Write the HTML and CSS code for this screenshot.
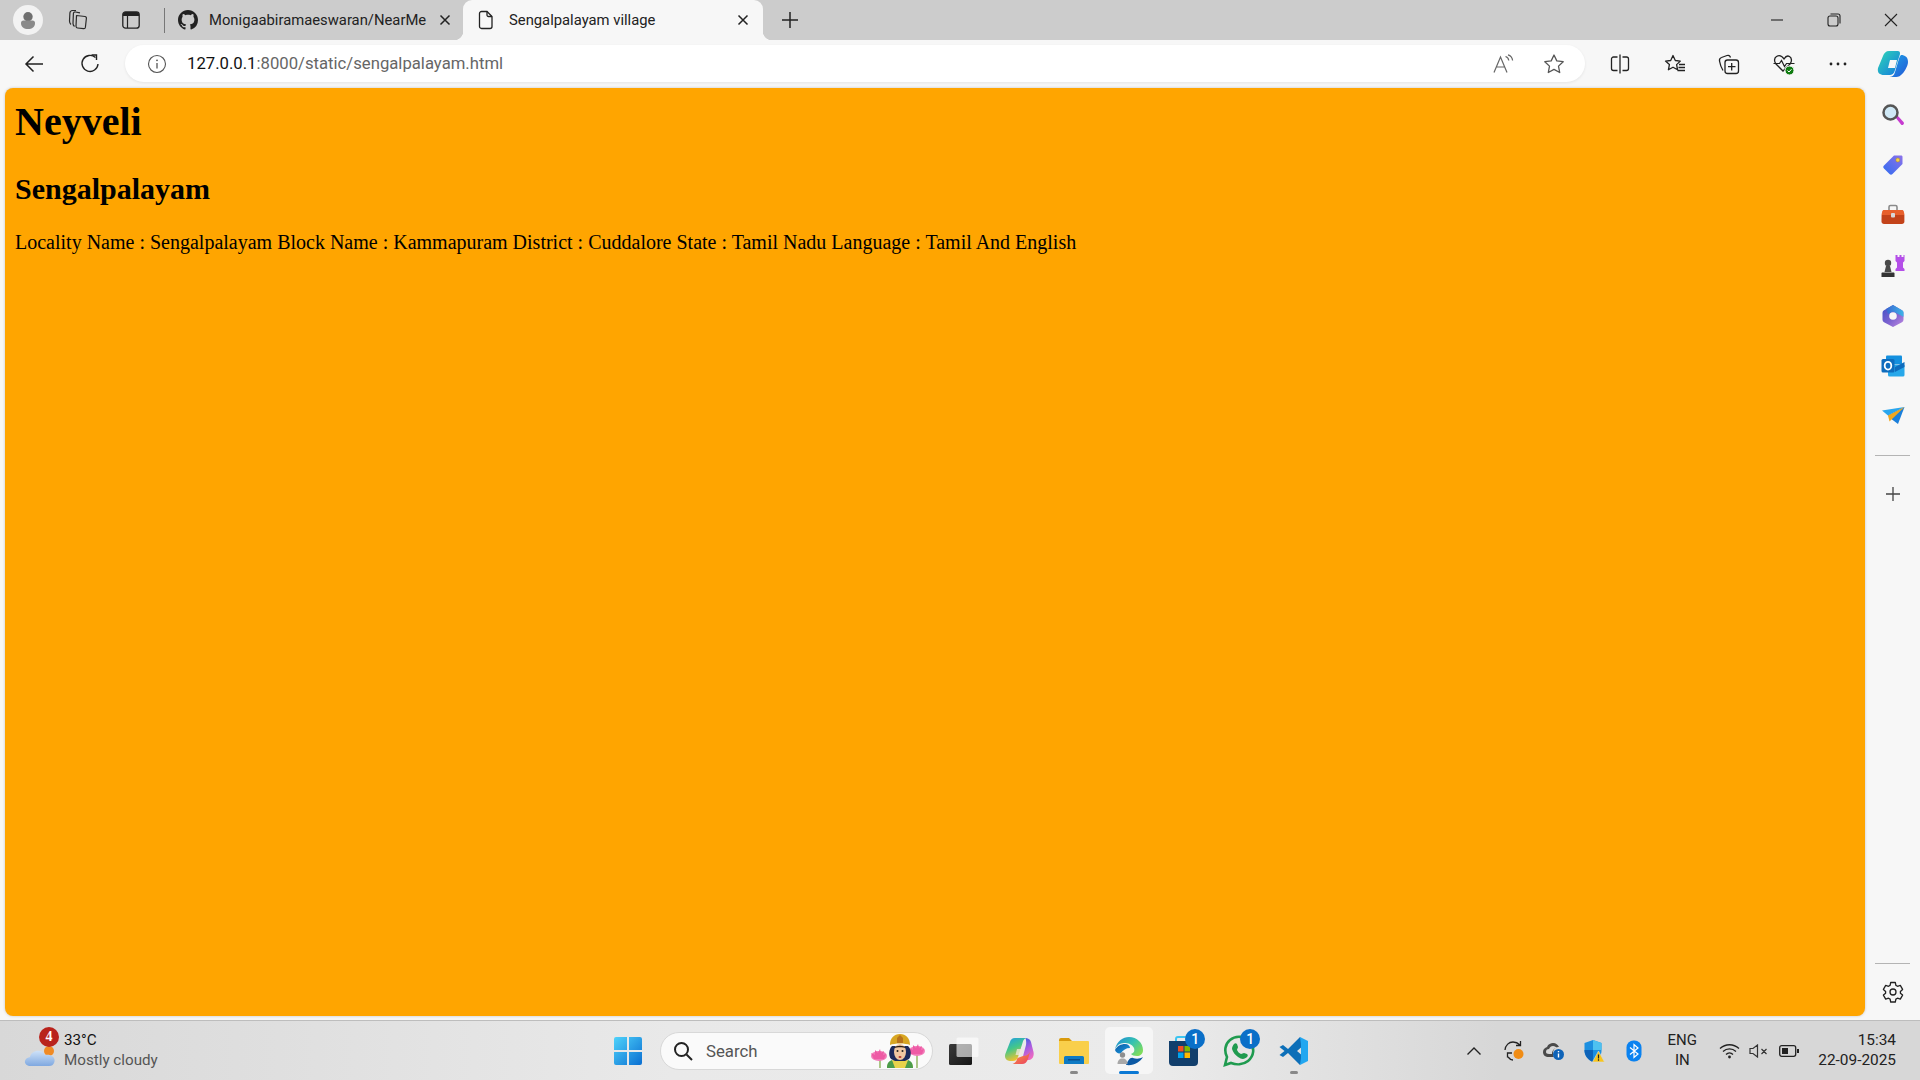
FILE: index.html
```html
<!DOCTYPE html>
<html lang="en">
<head>
    <meta charset="utf-8">
    <title>Sengalpalayam village</title>
    <link rel="stylesheet" href="styles.css">
</head>
<body>
<div class="tabstrip">
    <div class="profile">
        <svg width="30" height="30" viewBox="0 0 30 30"><circle cx="15" cy="11.700" r="4.700" fill="#6f6f6f"/><path d="M8 18a2.500 2.500 0 0 1 2.500-2.500h9A2.500 2.500 0 0 1 22 18c0 4-3 6-7 6s-7-2-7-6z" fill="#8a8a8a"/></svg>
    </div>
    <div class="strip-btn first">
        <svg width="22" height="22" viewBox="0 0 22 22" fill="none" stroke="#2a2a2a" stroke-width="1.200" stroke-linejoin="round"><path d="M9.500 6.500l8.500 1c1 .1 1.500.8 1.400 1.800l-1 9c-.1 1-.8 1.500-1.800 1.400l-6-.7c-1-.1-1.500-.8-1.600-1.800z"/><path d="M13 3.800L8.500 3c-1.200-.2-2 .5-2.100 1.500l-.4 10c0 1 .3 2 1.500 3"/><path d="M9 1.500L5.500 1.500C4 1.700 3 2.500 2.900 4L2.500 12c0 1.500.5 2.500 1.500 3.500"/></svg>
    </div>
    <div class="strip-btn second">
        <svg width="18" height="18" viewBox="0 0 18 18"><rect x=".8" y=".8" width="16.400" height="16.400" rx="2.800" fill="none" stroke="#222" stroke-width="1.300"/><path d="M1 3.500A2.500 2.500 0 0 1 3.500 1h11A2.500 2.500 0 0 1 17 3.500V5H1z" fill="#222"/><path d="M5.500 5v12" stroke="#222" stroke-width="1.200"/></svg>
    </div>
    <div class="strip-sep"></div>
    <div class="tab">
        <svg class="tab-icon" width="20" height="20" viewBox="0 0 16 16"><path fill="#222" d="M8 0C3.58 0 0 3.58 0 8c0 3.54 2.290 6.530 5.470 7.590.4.070.55-.17.55-.38 0-.19-.01-.82-.01-1.490-2.010.37-2.530-.49-2.690-.94-.09-.23-.48-.94-.82-1.130-.28-.15-.68-.52-.01-.53.63-.01 1.080.58 1.230.82.72 1.210 1.870.87 2.330.66.07-.52.28-.87.51-1.070-1.780-.2-3.640-.89-3.640-3.950 0-.87.31-1.590.82-2.150-.08-.2-.36-1.020.08-2.120 0 0 .67-.21 2.200.82.64-.18 1.320-.27 2-.27.68 0 1.360.09 2 .27 1.530-1.040 2.200-.82 2.200-.82.44 1.100.16 1.920.08 2.120.51.56.82 1.270.82 2.150 0 3.070-1.870 3.750-3.650 3.950.29.25.54.73.54 1.480 0 1.070-.01 1.930-.01 2.200 0 .21.15.46.55.38A8.013 8.013 0 0 0 16 8c0-4.420-3.580-8-8-8z"/></svg>
        <span class="tab-title">Monigaabiramaeswaran/NearMe</span>
        <svg class="tab-close" width="12" height="12" viewBox="0 0 12 12" stroke="#222" stroke-width="1.500"><path d="M1.500 1.500l9 9M10.500 1.500l-9 9"/></svg>
    </div>
    <div class="tab active">
        <svg class="tab-icon" width="16" height="20" viewBox="0 0 16 20" fill="none" stroke="#222" stroke-width="1.300"><path d="M3.500 1.500h5.500l5 5v10a2 2 0 0 1-2 2h-8.500a2 2 0 0 1-2-2v-13a2 2 0 0 1 2-2z"/><path d="M9 1.500v3.500a1.500 1.500 0 0 0 1.500 1.500h3.500"/></svg>
        <span class="tab-title">Sengalpalayam village</span>
        <svg class="tab-close" width="12" height="12" viewBox="0 0 12 12" stroke="#222" stroke-width="1.500"><path d="M1.500 1.500l9 9M10.500 1.500l-9 9"/></svg>
    </div>
    <div class="new-tab">
        <svg width="20" height="20" viewBox="0 0 20 20" stroke="#222" stroke-width="1.500"><path d="M10 2v16M2 10h16"/></svg>
    </div>
    <div class="window-btns">
        <div class="win-btn min"><svg width="14" height="14" viewBox="0 0 14 14" stroke="#222" stroke-width="1.100"><path d="M1 7h12"/></svg></div>
        <div class="win-btn restore"><svg width="14" height="14" viewBox="0 0 14 14" fill="none" stroke="#222" stroke-width="1.100"><rect x="1" y="3" width="10" height="10" rx="2"/><path d="M3.500 1h7.500a2 2 0 0 1 2 2v7.500"/></svg></div>
        <div class="win-btn close"><svg width="14" height="14" viewBox="0 0 14 14" stroke="#222" stroke-width="1.100"><path d="M1 1l12 12M13 1L1 13"/></svg></div>
    </div>
</div>

<div class="toolbar">
    <div class="nav-btn back">
        <svg width="20" height="20" viewBox="0 0 20 20" fill="none" stroke="#222" stroke-width="1.500"><path d="M19 10H2M9.500 2.500L2 10l7.500 7.500"/></svg>
    </div>
    <div class="nav-btn refresh">
        <svg width="20" height="20" viewBox="0 0 20 20" fill="none" stroke="#222" stroke-width="1.400"><path d="M15.500 3.600A8 8 0 1 0 18 10"/><path d="M11.500 1h5v5"/></svg>
    </div>
    <div class="addressbar">
        <svg class="info" width="20" height="20" viewBox="0 0 20 20" fill="none" stroke="#555" stroke-width="1.100"><circle cx="10" cy="10" r="8.500"/><path d="M10 9v5.500" stroke-width="1.300"/><circle cx="10" cy="6.300" r=".9" fill="#555" stroke="none"/></svg>
        <span class="url"><span class="url-host">127.0.0.1</span>:8000/static/sengalpalayam.html</span>
        <svg class="read" width="22" height="20" viewBox="0 0 22 20" fill="none" stroke="#666" stroke-width="1.200"><path d="M1 18.500L7.500 3l6.500 15.500M3.500 13h8"/><path d="M12.500 2.500c2 .5 3 2 3.300 4M15 .8c2.700.7 4.300 2.800 4.600 5.700"/></svg>
        <svg class="star" width="22" height="22" viewBox="0 0 22 22" fill="none" stroke="#555" stroke-width="1.300" stroke-linejoin="round"><path d="M11 2l2.800 5.900 6.400.8-4.700 4.400 1.200 6.400-5.700-3.100-5.700 3.100 1.200-6.400L1.800 8.700l6.400-.8z"/></svg>
    </div>
    <div class="tool-btns">
        <div class="tool-btn"><svg width="20" height="20" viewBox="0 0 20 20" fill="none" stroke="#222" stroke-width="1.300"><path d="M7.500 3H3.500a2 2 0 0 0-2 2v9.500a2 2 0 0 0 2 2h4M12.500 3h4a2 2 0 0 1 2 2v9.500a2 2 0 0 1-2 2h-4M10 .5v19"/></svg></div>
        <div class="tool-btn"><svg width="22" height="20" viewBox="0 0 22 20" fill="none" stroke="#222" stroke-width="1.300" stroke-linejoin="round"><path d="M9 1.500l2.300 5 5 .6-3.700 3.500 1 5.200L9 13.200l-4.600 2.600 1-5.200L1.500 7.100l5.200-.6z"/><path d="M15 10.500h6M14.500 13.500h6.500M13.500 16.500h7.500"/></svg></div>
        <div class="tool-btn"><svg width="22" height="22" viewBox="0 0 22 22" fill="none" stroke="#222" stroke-width="1.300"><rect x="7" y="7" width="13.500" height="13.500" rx="2.500"/><path d="M13.700 10v7.500M10 13.700h7.500"/><path d="M5 17.500C3.500 15 2 11 1.500 8c-.3-2 .5-3 2-3.500L9 2.500c1.500-.5 3 0 3.500 2"/></svg></div>
        <div class="tool-btn"><svg width="24" height="24" viewBox="0 0 24 24"><path d="M12 7c-2-3-5-4-7.500-2.500C2 6 2 9.500 4 12l7 7 7-7c2-2.500 2-6-.5-7.500C15 3 13.500 4.500 12 7z" fill="none" stroke="#222" stroke-width="1.300"/><path d="M1.500 11.500h6l2-3 3 6 2-3h8" fill="none" stroke="#222" stroke-width="1.200"/><circle cx="17.500" cy="18.500" r="4.500" fill="#107c10" stroke="#f7f7f7"/><path d="M15.500 18.500l1.500 1.500 2.500-2.800" fill="none" stroke="#fff" stroke-width="1"/></svg></div>
        <div class="tool-btn"><svg width="18" height="4" viewBox="0 0 18 4" fill="#222"><circle cx="2" cy="2" r="1.400"/><circle cx="9" cy="2" r="1.400"/><circle cx="16" cy="2" r="1.400"/></svg></div>
        <div class="tool-btn"><svg width="32" height="28" viewBox="0 0 32 28"><defs><linearGradient id="cpA" x1="0" y1="0" x2="1" y2="1"><stop offset="0" stop-color="#2fd8b5"/><stop offset="1" stop-color="#1478e0"/></linearGradient><linearGradient id="cpB" x1="0" y1="0" x2="1" y2="1"><stop offset="0" stop-color="#1ba8e8"/><stop offset="1" stop-color="#2457d6"/></linearGradient></defs><path d="M12 1h8c3 0 3 1 3 3l-5 16c-1 4-3 5-6 5H7C3 25 0 23 1 18l5-12c1-3 3-5 6-5z" fill="url(#cpA)"/><path d="M24 5c4 0 7 2 7 7 0 4-4 11-7 13-2 2-4 2-7 2H11c4 0 6-1 7-5l3-10c1-3 1-5 3-7z" fill="url(#cpB)"/><path d="M13 10h7l-2 8h-7z" fill="#f7f7f7"/></svg></div>
    </div>
</div>

<div class="main">
    <div class="page">
        <h1>Neyveli</h1>
        <h2>Sengalpalayam</h2>
        <p>Locality Name : Sengalpalayam Block Name : Kammapuram District : Cuddalore State : Tamil Nadu Language : Tamil And English</p>
    </div>
    <div class="sidebar">
        <div class="side-btn"><svg width="24" height="24" viewBox="0 0 24 24"><path d="M14.500 14.500l2-2 6 6.500c.8 1 .5 1.800-.2 2.500-.7.700-1.600.7-2.300 0z" fill="#c63bd0"/><circle cx="9.500" cy="9.500" r="7" fill="#cfe8f5" stroke="#555" stroke-width="2.500"/></svg></div>
        <div class="side-btn"><svg width="22" height="22" viewBox="0 0 22 22"><defs><linearGradient id="tagG" x1="0" y1="1" x2="1" y2="0"><stop offset="0" stop-color="#2f6cf0"/><stop offset="1" stop-color="#8c72ea"/></linearGradient></defs><path d="M12 1.500h7c1 0 1.500.5 1.500 1.500v7L10.500 20c-1 1-2 1-3 0L2 14.500c-1-1-1-2 0-3z" fill="url(#tagG)"/><circle cx="15.800" cy="6" r="2" fill="#f3d14a" stroke="#b08a20" stroke-width=".5"/></svg></div>
        <div class="side-btn"><svg width="24" height="22" viewBox="0 0 24 22"><path d="M8 6V3c0-1 .7-1.500 1.500-1.500h5c.8 0 1.500.5 1.500 1.500v3" fill="none" stroke="#8a8a8a" stroke-width="1.600"/><path d="M3 6h18c1 0 1.600.6 1.800 1.500l.7 3.500H.5l.7-3.500C1.400 6.600 2 6 3 6z" fill="#e8602c"/><path d="M.6 11h22.800v6.500c0 1.400-1 2.500-2.500 2.500H3c-1.500 0-2.500-1.100-2.500-2.500z" fill="#c3431a"/><rect x="10" y="9" width="4" height="4.500" rx="1" fill="#d8d8d8"/></svg></div>
        <div class="side-btn"><svg width="24" height="24" viewBox="0 0 24 24"><path d="M14.500 1h2v2h2V1h2v2h2V1h1v6l-1.500 1.500v5l1.500 1.500v2h-9v-2l1.500-1.500v-5L14.500 7z" fill="#b44fe8"/><circle cx="7" cy="9" r="3.200" fill="#4a4a4a"/><path d="M5 12h4l1.500 6h-7z" fill="#4a4a4a"/><path d="M1.500 18.500h11c.6 0 1 .5 1 1v3.500H.5v-3.500c0-.5.400-1 1-1z" fill="#333"/></svg></div>
        <div class="side-btn"><svg width="22" height="24" viewBox="0 0 22 24"><defs><linearGradient id="msA" x1="0" y1="0" x2="1" y2="1"><stop offset="0" stop-color="#3d4ec4"/><stop offset=".55" stop-color="#7e63d0"/><stop offset="1" stop-color="#c08ae0"/></linearGradient><linearGradient id="msB" x1="0" y1="0" x2="1" y2="0"><stop offset="0" stop-color="#3a66d0"/><stop offset="1" stop-color="#3fb4e8"/></linearGradient></defs><path d="M11 1l9 5.200a3 3 0 0 1 1.500 2.500v7a3 3 0 0 1-1.500 2.500L11 23 2 18.200A3 3 0 0 1 .5 15.700v-7A3 3 0 0 1 2 6.200z" fill="url(#msA)"/><path d="M11 1l9 5.200c1 .6 1.500 1.500 1.500 2.500v4l-6-3L11 7.500 6 10 4 4.900z" fill="url(#msB)"/><circle cx="11" cy="12" r="3.800" fill="#f7f7f7"/></svg></div>
        <div class="side-btn"><svg width="24" height="22" viewBox="0 0 24 22"><rect x="5" y="0.500" width="16" height="9" rx="1" fill="#1490df"/><path d="M7 10h16.500v10a1.500 1.500 0 0 1-1.500 1.500H8.500A1.500 1.500 0 0 1 7 20z" fill="#28a8ea"/><path d="M14 12l9.500-5v5l-9.500 5z" fill="#0f6cbd"/><rect x=".5" y="4" width="13" height="13.500" rx="1.500" fill="#0f6cbd"/><ellipse cx="7" cy="10.700" rx="3.300" ry="3.900" fill="none" stroke="#fff" stroke-width="1.800"/></svg></div>
        <div class="side-btn"><svg width="24" height="20" viewBox="0 0 24 20"><path d="M1 4.500L23.500 1 7 9.500z" fill="#2aa6ee"/><path d="M7 9.500L23.500 1l-6.500 17-6-4.500z" fill="#1b7fdb"/><path d="M7 9.500l16.500-8.500L8.500 15.500z" fill="#f0a71f"/></svg></div>
        <div class="side-sep add-sep"></div>
        <div class="side-btn add"><svg width="16" height="16" viewBox="0 0 16 16" stroke="#444" stroke-width="1.300"><path d="M8 1v14M1 8h14"/></svg></div>
        <div class="side-sep settings-sep"></div>
        <div class="side-btn settings"><svg width="22" height="22" viewBox="0 0 22 22" fill="none" stroke="#222" stroke-width="1.300" stroke-linejoin="round"><path d="M8.700 1.500h4.600l.6 2.900 1.600.9 2.800-.9 2.300 4-2.200 2 0 1.800 2.200 1.900-2.300 4-2.800-.9-1.600.9-.6 2.900H8.700l-.6-2.900-1.600-.9-2.800.9-2.300-4 2.200-1.900 0-1.800-2.200-2 2.300-4 2.800.9 1.600-.9z"/><circle cx="11" cy="11" r="3"/></svg></div>
    </div>
</div>

<div class="taskbar">
    <div class="task-left">
        <div class="weather-icon">
            <svg width="32" height="24" viewBox="0 0 32 24"><defs><linearGradient id="cloudG" x1="0" y1="0" x2="0" y2="1"><stop offset="0" stop-color="#cfe2f8"/><stop offset="1" stop-color="#7fa8e0"/></linearGradient></defs><circle cx="25" cy="7" r="5" fill="#f08a24"/><path d="M7 22c-8 0-8-8-1-9 1-7 12-9 15-2 8-1 11 4 9 8-1 2-2 3-5 3z" fill="url(#cloudG)"/></svg>
            <span class="weather-badge">4</span>
        </div>
        <div class="weather-text">
            <span class="temp">33°C</span>
            <span class="cond">Mostly cloudy</span>
        </div>
    </div>
    <div class="task-center">
        <div class="task-icon">
            <svg width="30" height="30" viewBox="0 0 30 30"><defs><linearGradient id="winG" x1="0" y1="0" x2="1" y2="1"><stop offset="0" stop-color="#4fd3fb"/><stop offset="1" stop-color="#0a6ed1"/></linearGradient></defs><path d="M1 3a2 2 0 0 1 2-2h11v13H1zM16 1h11a2 2 0 0 1 2 2v11H16zM1 16h13v13H3a2 2 0 0 1-2-2zM16 16h13v11a2 2 0 0 1-2 2H16z" fill="url(#winG)"/></svg>
        </div>
        <div class="searchbox">
            <svg width="20" height="20" viewBox="0 0 20 20" fill="none" stroke="#222" stroke-width="2"><circle cx="8.500" cy="8.500" r="6.500"/><path d="M13.500 13.500L19 19"/></svg>
            <span class="search-label">Search</span>
            <svg class="search-art" width="56" height="34" viewBox="0 0 56 34"><path d="M10 34V24M47 34V20" stroke="#7ba53c" stroke-width="1.200"/><ellipse cx="9" cy="22" rx="8" ry="5" fill="#f27ab8"/><path d="M1 19l4 2 0-5 3 3 2-4 1 4 3-2-1 4 3-1-2 5H4z" fill="#ee5aa5"/><ellipse cx="47" cy="17" rx="8" ry="5" fill="#f27ab8"/><path d="M39 14l4 2 0-5 3 3 2-4 1 4 3-2-1 4 3-1-2 5h-11z" fill="#ee5aa5"/><path d="M17 34c0-6 5-9 13-9s13 3 13 9z" fill="#e8d24a"/><path d="M17 34c0-5 2-7 5-8l3 8zM43 34c0-5-2-7-5-8l-3 8z" fill="#4b9c4a"/><path d="M21 25c-3-4-2-10 1-13h16c3 3 4 9 1 13l-4 2H25z" fill="#1c2a5c"/><path d="M20 11C20 4 24 0 30 0s10 4 10 11c-4-2-16-2-20 0z" fill="#d8a622"/><path d="M27 4l3-3 3 3v5h-6z" fill="#b8731c"/><ellipse cx="30" cy="18" rx="6" ry="8" fill="#f0c7a2"/><path d="M24 14c2-3 10-3 12 0-3-1-9-1-12 0z" fill="#2a1c12"/><circle cx="27.500" cy="17" r="1" fill="#222"/><circle cx="32.500" cy="17" r="1" fill="#222"/><ellipse cx="30" cy="23" rx="1.500" ry="1" fill="#b3372c"/></svg>
        </div>
        <div class="task-icon taskview">
            <svg width="30" height="28" viewBox="0 0 30 28"><defs><linearGradient id="tvG" x1="0" y1="0" x2="1" y2="1"><stop offset="0" stop-color="#3a3a3a"/><stop offset="1" stop-color="#161616"/></linearGradient></defs><rect x="0" y="7" width="23" height="21" rx="1.500" fill="url(#tvG)"/><rect x="7.500" y=".5" width="22" height="19.500" rx="1.500" fill="#fff" fill-opacity=".62"/></svg>
        </div>
        <div class="task-icon">
            <svg width="30" height="28" viewBox="0 0 30 28"><defs><linearGradient id="tbCopA" x1="0" y1="0" x2=".4" y2="1"><stop offset="0" stop-color="#1f9be8"/><stop offset=".5" stop-color="#43c78a"/><stop offset="1" stop-color="#f5c32c"/></linearGradient><linearGradient id="tbCopB" x1=".2" y1="0" x2=".6" y2="1"><stop offset="0" stop-color="#3a5fe0"/><stop offset=".5" stop-color="#a85ce0"/><stop offset="1" stop-color="#f06ac0"/></linearGradient><linearGradient id="tbCopC" x1="0" y1="0" x2="1" y2="1"><stop offset="0" stop-color="#f7a03a"/><stop offset="1" stop-color="#ec3f63"/></linearGradient></defs><path d="M11 1C8 1 6.500 3 6 5L1.500 16.500C0 20.500 2 24 6 24h3c2 0 4-1 5-4l4.500-14c.5-3 2-5 4.500-5z" fill="url(#tbCopA)"/><path d="M21 1c3 0 5 1 6 4l2.500 10c1 5-2 8-5.500 8h-6l4-15c.5-3 0-7-1-7z" fill="url(#tbCopB)"/><path d="M13.500 21c-1 3.500-3 6-6 6H18c3 0 5-2 6-5l2-7c-2 3-4 4-7 4z" fill="url(#tbCopC)"/><path d="M13 12h6l-1.500 6h-6z" fill="#f3e9e0" fill-opacity=".75"/></svg>
        </div>
        <div class="task-icon open">
            <svg width="30" height="27" viewBox="0 0 30 27"><path d="M0 3a2 2 0 0 1 2-2h8l3 3h-13z" fill="#d99a0c"/><path d="M0 4h29a1 1 0 0 1 1 1v21a1 1 0 0 1-1 1H1a1 1 0 0 1-1-1z" fill="#f9cf4b"/><path d="M5 20.500a1.500 1.500 0 0 1 1.500-1.500h17a1.500 1.500 0 0 1 1.500 1.500V27H5z" fill="#0e7ac4"/><rect x="9" y="22" width="12" height="1.500" fill="#0a4f8c"/></svg>
        </div>
        <div class="task-icon active">
            <svg width="30" height="30" viewBox="0 0 30 30"><defs><linearGradient id="edgeA" x1="0" y1="0" x2="1" y2=".7"><stop offset="0" stop-color="#1b86d8"/><stop offset=".55" stop-color="#35c1b1"/><stop offset="1" stop-color="#7fdc5c"/></linearGradient><linearGradient id="edgeB" x1="0" y1="0" x2="1" y2="1"><stop offset="0" stop-color="#0c59a4"/><stop offset="1" stop-color="#1b9de2"/></linearGradient></defs><path d="M1 13C3 5 9 1 15 1c8 0 14 6 14 13 0 4-3 6-6 6s-5-1-6-2c3-1 4-3 3-6-2-4-6-5-10-5-4 0-7 2-9 6z" fill="url(#edgeA)"/><path d="M1 14c2-4 6-6 10-6 3 0 5 2 5 4-4 0-7 2-9 5-2 1-5 0-6-3z" fill="url(#edgeB)"/><path d="M12 29c8 1 14-3 17-8-3 2-7 2-10 1-3-1-5 3-7 7z" fill="#0c59a4"/><circle cx="8.500" cy="19" r="2.700" fill="#8e8e8e"/><path d="M3.500 28c0-3.500 2-5.500 5-5.500s5 2 5 5.500z" fill="#a8a8a8"/></svg>
        </div>
        <div class="task-icon">
            <svg width="30" height="30" viewBox="0 0 30 30"><path d="M7 6V3c0-1 1-2 2-2h9" fill="none" stroke="#3cc4f0" stroke-width="2"/><path d="M0 5h29v21a4 4 0 0 1-4 4H4a4 4 0 0 1-4-4z" fill="#123f6c"/><rect x="9" y="10" width="5.500" height="5.500" fill="#f25022"/><rect x="15.500" y="10" width="5.500" height="5.500" fill="#7fba00"/><rect x="9" y="16.500" width="5.500" height="5.500" fill="#00a4ef"/><rect x="15.500" y="16.500" width="5.500" height="5.500" fill="#ffb900"/></svg>
            <span class="count-badge">1</span>
        </div>
        <div class="task-icon">
            <svg width="32" height="32" viewBox="0 0 32 32"><path d="M2 30l2-8C1 16 2 9 7 5c6-5 15-4 20 2 5 6 4 14-2 19-5 4-12 4-17 2z" fill="none" stroke="#1f9b4f" stroke-width="2.600"/><path d="M11 9c1-1 2-1 3 0l1 3c0 1-1 2-1 3 1 2 2 3 4 4 1 0 2-1 3-1l3 1c1 1 1 2 0 3-2 2-5 3-9 0-3-2-5-5-6-8 0-2 1-4 2-5z" fill="#1f9b4f"/></svg>
            <span class="count-badge">1</span>
        </div>
        <div class="task-icon open">
            <svg width="30" height="30" viewBox="0 0 30 30"><path d="M21 1L9 13 4 9 .5 11l5 4-5 4L4 21l5-4 12 12 4-8-7-6 7-6z" fill="#0d6fb8"/><path d="M21 1l8 4v20l-8 4 1-7V8z" fill="#22a7f0"/></svg>
        </div>
    </div>
    <div class="task-right">
        <div class="tray-icon"><svg width="16" height="10" viewBox="0 0 16 10" fill="none" stroke="#222" stroke-width="1.400"><path d="M1.500 8.500L8 2l6.500 6.500"/></svg></div>
        <div class="tray-icon"><svg width="22" height="22" viewBox="0 0 22 22" fill="none" stroke="#222" stroke-width="1.300"><path d="M2 10C2.500 5 6 2 10 2c3 0 5 1 7 3M17.500 1v4.500H13"/><path d="M4.500 17.500V13H9M5 17c1.500 2 3 3 5 3"/><circle cx="15.500" cy="14" r="5" fill="#f08c14" stroke="none"/></svg></div>
        <div class="tray-icon"><svg width="22" height="20" viewBox="0 0 22 20"><path d="M6 16c-4 0-6-2-6-5 0-3 2-4 4-5 1-3 4-4 6-4 3 0 5 2 6 4-3 0-6 2-6 6 0 2 0 3 1 4z" fill="#4a4a4a"/><path d="M6 13c-2 0-3-1-3-2 0-2 1-3 3-3 1-2 2-3 4-3 2 0 3 1 4 2-3 0-5 3-5 6z" fill="#d8d8d8"/><circle cx="15.500" cy="13.500" r="5.500" fill="#0e63b8"/><path d="M15.500 12.500v4M15.500 10v1.200" stroke="#fff" stroke-width="1.400"/></svg></div>
        <div class="tray-icon"><svg width="22" height="24" viewBox="0 0 22 24"><path d="M10 1l8.500 3v8c0 5-4 9-8.500 11-4.500-2-8.500-6-8.500-11V4z" fill="#1c8fe0"/><path d="M10 1l8.500 3v7H10z" fill="#4dc1f0"/><path d="M1.500 11H10v12c-4.500-2-8.500-6-8.500-12z" fill="#0e63b8"/><path d="M15.500 12l6 11h-12z" fill="#f8c51c" stroke="#d8d8d8" stroke-width=".6"/><path d="M15.500 15.500v4M15.500 20.300v1.400" stroke="#222" stroke-width="1.200"/></svg></div>
        <div class="tray-icon"><svg width="16" height="22" viewBox="0 0 16 22"><rect x="0.500" y="0.500" width="15" height="21" rx="7" fill="#0a82f0"/><path d="M4 7.500l8 6.500-4 3.500v-13l4 3.500-8 6.500" fill="none" stroke="#fff" stroke-width="1.200"/></svg></div>
        <div class="lang"><span>ENG</span><span>IN</span></div>
        <div class="tray-status wifi"><svg width="21" height="16" viewBox="0 0 21 16" fill="none" stroke="#222" stroke-width="1.300"><path d="M1 5.500c5.500-5 13.500-5 19 0M4 8.500c3.800-3.500 9.200-3.500 13 0M7 11.500c2-2 5-2 7 0"/><circle cx="10.500" cy="14" r="1.400" fill="#222" stroke="none"/></svg></div>
        <div class="tray-status sound"><svg width="20" height="14" viewBox="0 0 20 14" fill="none" stroke="#333" stroke-width="1.200"><path d="M1 4.500h3L8.500 1v12L4 9.500H1zM12.500 5l5 5M17.500 5l-5 5"/></svg></div>
        <div class="tray-status battery"><svg width="20" height="12" viewBox="0 0 20 12"><rect x=".7" y=".7" width="16" height="10.600" rx="2" fill="none" stroke="#222" stroke-width="1.300"/><rect x="3" y="3" width="6" height="6" fill="#222"/><rect x="18" y="4" width="2" height="4" fill="#222"/></svg></div>
        <div class="clock"><span>15:34</span><span>22-09-2025</span></div>
    </div>
</div>
</body>
</html>
```

FILE: styles.css
```css
html, body {
    height: 100%;
    margin: 0;
}
body {
    display: flex;
    flex-direction: column;
    overflow: hidden;
    background: #f7f7f7;
    font-family: Roboto, "Noto Sans", sans-serif;
    color: #222;
}

/* tab strip */
.tabstrip {
    display: flex;
    align-items: center;
    height: 40px;
    flex: none;
    padding-left: 13px;
    background: #cccccc;
}
.profile {
    width: 30px;
    height: 30px;
    flex: none;
    border-radius: 50%;
    background: #f2f2f2;
}
.strip-btn {
    display: flex;
    align-items: center;
    justify-content: center;
    width: 40px;
    flex: none;
}
.strip-btn.first {
    margin-left: 15px;
}
.strip-btn.second {
    margin-left: 13px;
}
.strip-sep {
    width: 1px;
    height: 25px;
    margin-left: 13px;
    flex: none;
    background: #777;
}
.tab {
    display: flex;
    align-items: center;
    position: relative;
    box-sizing: border-box;
    width: 298px;
    height: 40px;
    flex: none;
    padding: 0 12px 0 13px;
    font-size: 14.8px;
}
.tab.active {
    width: 300px;
    padding-left: 15px;
    padding-right: 14px;
    background: #f7f7f7;
    border-radius: 9px 9px 0 0;
}
.tab.active::before,
.tab.active::after {
    content: "";
    position: absolute;
    bottom: 0;
    width: 9px;
    height: 9px;
}
.tab.active::before {
    left: -9px;
    background: radial-gradient(circle at 0 0, #cccccc 9px, #f7f7f7 9.5px);
}
.tab.active::after {
    right: -9px;
    background: radial-gradient(circle at 100% 0, #cccccc 9px, #f7f7f7 9.5px);
}
.tab-icon {
    flex: none;
    margin-right: 11px;
}
.tab.active .tab-icon {
    margin-right: 15px;
}
.tab-title {
    flex: 1;
    white-space: nowrap;
    overflow: hidden;
}
.tab-close {
    flex: none;
}
.new-tab {
    display: flex;
    margin-left: 17px;
    flex: none;
}
.window-btns {
    display: flex;
    margin-left: auto;
}
.win-btn {
    display: flex;
    align-items: center;
    justify-content: center;
    width: 57px;
    height: 40px;
}
.win-btn.min {
    width: 56px;
}
.win-btn.close {
    width: 58px;
}

/* address row */
.toolbar {
    display: flex;
    align-items: center;
    height: 48px;
    flex: none;
    padding-left: 14px;
    background: #f7f7f7;
}
.nav-btn {
    display: flex;
    justify-content: center;
    width: 40px;
    flex: none;
}
.nav-btn.refresh {
    margin-left: 16px;
}
.addressbar {
    display: flex;
    align-items: center;
    flex: 1;
    height: 37px;
    margin: 0 8px 1px 15px;
    padding: 0 20px 0 22px;
    border-radius: 19px;
    background: #fff;
    box-shadow: 0 1px 3px rgba(0,0,0,.08);
}
.url {
    flex: 1;
    margin-left: 20px;
    font-size: 16.7px;
    color: #666;
}
.url-host {
    color: #111;
}
.read {
    margin-right: 28px;
}
.tool-btns {
    display: flex;
    flex: none;
}
.tool-btn {
    display: flex;
    align-items: center;
    justify-content: center;
    width: 54.5px;
}

/* page and edge sidebar */
.main {
    display: flex;
    flex: 1;
    min-height: 0;
    padding: 0 0 4px 5px;
}
.page {
    flex: 1;
    padding: 0 10px;
    border-radius: 8px;
    background: orange;
    color: #000;
    font-family: "Liberation Serif", serif;
    box-shadow: 0 0 3px rgba(0,0,0,.2);
}
.page h1 {
    margin: 10px 0 27px;
    font-size: 40px;
}
.page h2 {
    margin: 0 0 25px;
    font-size: 30px;
}
.page p {
    margin: 0;
    font-size: 20px;
}
.sidebar {
    display: flex;
    flex-direction: column;
    align-items: center;
    width: 55px;
    flex: none;
    padding: 2px 0 0;
}
.side-btn {
    display: flex;
    align-items: center;
    justify-content: center;
    height: 50.2px;
    flex: none;
}
.side-sep {
    width: 35px;
    height: 1px;
    flex: none;
    background: #b4b4b4;
}
.add-sep {
    margin-top: 14px;
}
.side-btn.add {
    margin-top: 13px;
}
.settings-sep {
    margin-top: auto;
    margin-bottom: 3px;
}
.side-btn.settings {
    margin-bottom: -1px;
}

/* windows taskbar */
.taskbar {
    display: grid;
    grid-template-columns: 600px auto 1fr;
    align-items: center;
    box-sizing: border-box;
    height: 60px;
    flex: none;
    border-top: 1px solid #bdbdbd;
    background: linear-gradient(90deg, #d8d8d8, #e9e9e9 35%, #ebebeb 60%, #d7d7d7 78%, #d7d7d7);
}
.task-left {
    display: flex;
    align-items: center;
    padding-left: 24px;
}
.weather-icon {
    position: relative;
    width: 32px;
    height: 24px;
    margin-top: 11px;
    flex: none;
}
.weather-badge {
    position: absolute;
    left: 15px;
    top: -17px;
    width: 20px;
    height: 20px;
    border-radius: 50%;
    background: #b9231c;
    color: #fff;
    font: bold 14px/20px "Liberation Serif", serif;
    text-align: center;
}
.weather-text {
    display: flex;
    flex-direction: column;
    margin: -2px 0 0 8px;
    font-size: 15.2px;
    line-height: 20px;
}
.temp {
    color: #111;
}
.cond {
    color: #555;
}
.task-center {
    display: flex;
    align-items: center;
}
.task-icon {
    display: flex;
    align-items: center;
    justify-content: center;
    position: relative;
    width: 55px;
    height: 47px;
    flex: none;
}
.task-icon.taskview {
    margin-left: 3.2px;
}
.task-icon.open::after {
    content: "";
    position: absolute;
    bottom: 0;
    left: 24px;
    width: 8px;
    height: 3px;
    border-radius: 2px;
    background: #888;
}
.task-icon.active {
    box-sizing: border-box;
    border-radius: 5px;
    background: #f6f6f6;
    width: 48px;
    margin: 0 3.5px;
}
.task-icon.active::after {
    content: "";
    position: absolute;
    bottom: 0;
    left: 14px;
    width: 20px;
    height: 3px;
    border-radius: 2px;
    background: #0a78d4;
}
.count-badge {
    position: absolute;
    top: 2px;
    right: 6px;
    width: 20px;
    height: 20px;
    border-radius: 50%;
    background: #0a6fc8;
    color: #fff;
    font-size: 14px;
    font-weight: 500;
    line-height: 20px;
    text-align: center;
}
.searchbox {
    display: flex;
    align-items: center;
    box-sizing: border-box;
    width: 273px;
    height: 38px;
    margin-left: 5px;
    flex: none;
    padding: 0 6px 0 12px;
    border: 1px solid #d8d8d8;
    border-radius: 19px;
    background: #fafafa;
}
.search-label {
    flex: 1;
    margin-left: 13px;
    font-size: 16.8px;
    color: #555;
}
.task-right {
    display: flex;
    align-items: center;
    justify-content: flex-end;
    padding-right: 24px;
}
.tray-icon {
    display: flex;
    align-items: center;
    justify-content: center;
    width: 40px;
    flex: none;
}
.lang {
    display: flex;
    flex-direction: column;
    align-items: center;
    width: 56px;
    margin-top: -2px;
    flex: none;
    font-size: 15px;
    line-height: 20px;
}
.tray-status {
    display: flex;
    align-items: center;
    justify-content: center;
    width: 29px;
    flex: none;
}
.tray-status.wifi {
    margin-left: 5px;
}
.tray-status.battery {
    width: 32px;
    margin-right: 13px;
}
.clock {
    display: flex;
    flex-direction: column;
    align-items: flex-end;
    margin-top: -2px;
    flex: none;
    font-size: 15.4px;
    line-height: 20px;
}
```
